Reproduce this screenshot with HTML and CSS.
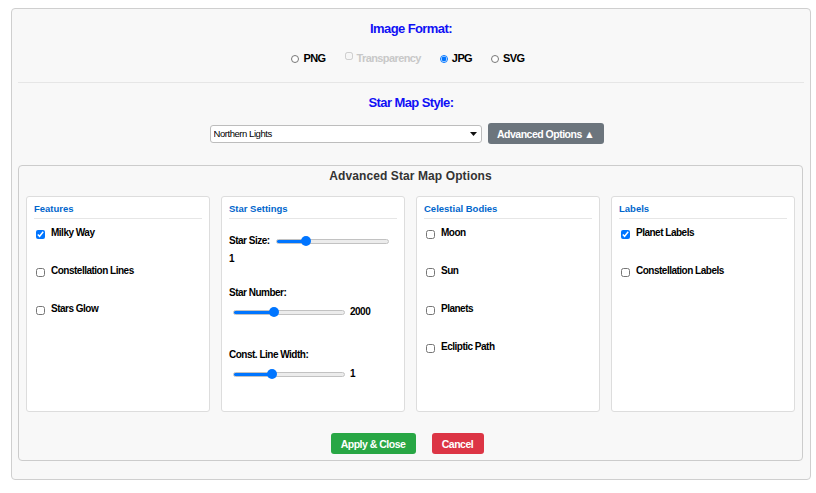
FILE: index.html
```html
<!DOCTYPE html>
<html lang="en">
<head>
<meta charset="utf-8">
<title>Star Map Export</title>
<link rel="stylesheet" href="styles.css">
</head>
<body>
<div class="container">
  <section class="format">
    <h3 class="section-title">Image Format:</h3>
    <div class="radio-row">
      <label class="opt"><input type="radio" name="fmt"><span>PNG</span></label>
      <label class="opt disabled"><input type="checkbox" disabled><span>Transparency</span></label>
      <label class="opt"><input type="radio" name="fmt" checked><span>JPG</span></label>
      <label class="opt"><input type="radio" name="fmt"><span>SVG</span></label>
    </div>
  </section>
  <section class="style">
    <h3 class="section-title">Star Map Style:</h3>
    <div class="style-row">
      <div class="select-wrap">
        <select class="style-select">
          <option>Northern Lights</option>
        </select>
        <svg class="select-arrow" width="7" height="4" viewBox="0 0 7 4"><path d="M0 0H7L3.5 4Z" fill="#111"/></svg>
      </div>
      <button class="btn btn-grey">Advanced Options ▲</button>
    </div>
  </section>
  <section class="panel">
    <h2 class="panel-title">Advanced Star Map Options</h2>
    <div class="cards">
      <div class="card">
        <h4 class="card-title">Features</h4>
        <label class="check"><input type="checkbox" checked><span>Milky Way</span></label>
        <label class="check"><input type="checkbox"><span>Constellation Lines</span></label>
        <label class="check"><input type="checkbox"><span>Stars Glow</span></label>
      </div>
      <div class="card">
        <h4 class="card-title">Star Settings</h4>
        <div class="slider-row first">
          <span class="lbl">Star Size:</span>
          <input type="range" class="range w113" min="0" max="100" value="24" style="--p:26%">
        </div>
        <div class="val-line">1</div>
        <div class="lbl group2">Star Number:</div>
        <div class="slider-row indent">
          <input type="range" class="range w112" min="0" max="100" value="35" style="--p:37%">
          <span class="val">2000</span>
        </div>
        <div class="lbl group3">Const. Line Width:</div>
        <div class="slider-row indent">
          <input type="range" class="range w112" min="0" max="100" value="33" style="--p:35%">
          <span class="val">1</span>
        </div>
      </div>
      <div class="card">
        <h4 class="card-title">Celestial Bodies</h4>
        <label class="check"><input type="checkbox"><span>Moon</span></label>
        <label class="check"><input type="checkbox"><span>Sun</span></label>
        <label class="check"><input type="checkbox"><span>Planets</span></label>
        <label class="check"><input type="checkbox"><span>Ecliptic Path</span></label>
      </div>
      <div class="card">
        <h4 class="card-title">Labels</h4>
        <label class="check"><input type="checkbox" checked><span>Planet Labels</span></label>
        <label class="check"><input type="checkbox"><span>Constellation Labels</span></label>
      </div>
    </div>
    <div class="actions">
      <button class="btn btn-green">Apply &amp; Close</button>
      <button class="btn btn-red">Cancel</button>
    </div>
  </section>
</div>
</body>
</html>
```
FILE: styles.css
```css
* { box-sizing: border-box; }
html, body { margin: 0; padding: 0; background: #fff; }
body {
  font-family: "Liberation Sans", Arial, sans-serif;
  color: #000;
}
.container {
  margin: 8px 0 0 11px;
  width: 800px;
  height: 472px;
  border: 1px solid #cfcfcf;
  border-radius: 4px;
  background: #f8f8f8;
  padding: 0 6px;
}
.section-title {
  margin: 0;
  font-size: 13px;
  letter-spacing: -0.6px;
  line-height: 16px;
  font-weight: bold;
  color: #1010f5;
  text-align: center;
}
.format {
  padding-top: 12px;
  padding-bottom: 16px;
  border-bottom: 1px solid #e6e6e6;
}
.radio-row {
  margin-top: 13px;
  display: flex;
  justify-content: center;
  gap: 19px;
  height: 16px;
  align-items: center;
  padding-right: 6px;
}
.opt {
  display: inline-flex;
  align-items: center;
  font-size: 11px;
  letter-spacing: -0.6px;
  font-weight: bold;
  line-height: 16px;
  white-space: nowrap;
}
.opt input {
  width: 8px;
  height: 8px;
  margin: 1px 4px 0 0;
}
.opt.disabled { color: #c8c8c8; }
.opt.disabled input { margin-top: -5px; }
.style { padding-top: 12px; }
.style-row {
  margin-top: 12px;
  display: flex;
  justify-content: center;
  align-items: center;
  gap: 6px;
  padding-right: 9px;
  height: 21px;
}
.select-wrap { position: relative; }
.style-select {
  appearance: none;
  -webkit-appearance: none;
  width: 272px;
  height: 18px;
  border: 1px solid #bdbdbd;
  border-radius: 3px;
  background: #fff;
  font-family: inherit;
  font-size: 9.5px;
  letter-spacing: -0.45px;
  color: #000;
  padding: 0 0 0 3px;
  margin: 0;
  display: block;
}
.select-arrow {
  position: absolute;
  right: 5px;
  top: 7px;
}
.btn {
  border: none;
  border-radius: 3px;
  color: #fff;
  font-family: inherit;
  font-weight: bold;
  font-size: 10.5px;
  letter-spacing: -0.5px;
  height: 21px;
  padding: 0;
  margin: 0;
  white-space: nowrap;
}
.btn-grey { background: #6c757d; width: 116px; }
.btn-green { background: #28a745; width: 85px; }
.btn-red { background: #dc3545; width: 52px; }
.panel {
  margin: 21px 1px 0 0;
  height: 296px;
  border: 1px solid #cccccc;
  border-radius: 4px;
  background: #f8f8f8;
  padding: 3px 7px 6px 7px;
}
.panel-title {
  margin: 0;
  font-size: 12px;
  letter-spacing: 0.1px;
  line-height: 14px;
  font-weight: bold;
  color: #333;
  text-align: center;
}
.cards {
  margin-top: 13px;
  display: grid;
  grid-template-columns: repeat(4, 1fr);
  gap: 11px;
  height: 216px;
}
.card {
  background: #fff;
  border: 1px solid #dddddd;
  border-radius: 3px;
  padding: 6px 7px 0 7px;
}
.card-title {
  margin: 0;
  font-size: 9.5px;
  line-height: 12px;
  font-weight: bold;
  color: #0066cc;
  padding-bottom: 3px;
  border-bottom: 1px solid #e6e6e6;
}
.check {
  display: flex;
  align-items: center;
  font-size: 10px;
  letter-spacing: -0.5px;
  font-weight: bold;
  line-height: 14px;
  height: 14px;
  margin-top: 24px;
  white-space: nowrap;
}
.card-title + .check { margin-top: 7px; }
.check input {
  width: 9px;
  height: 9px;
  margin: 2px 6px 0 2px;
}
.lbl, .val, .val-line {
  font-size: 10px;
  letter-spacing: -0.5px;
  font-weight: bold;
  line-height: 14px;
  white-space: nowrap;
}
.slider-row {
  display: flex;
  align-items: center;
  height: 16px;
}
.slider-row.first { margin-top: 14px; gap: 6px; }
.slider-row.indent { margin-top: 4px; padding-left: 4px; gap: 5px; }
.val-line { margin-top: 3px; }
.group2 { margin-top: 20px; }
.group3 { margin-top: 28px; }
.range {
  -webkit-appearance: none;
  appearance: none;
  height: 5px;
  margin: 0;
  flex: none;
  border-radius: 3px;
  border: 1px solid #c2c2c2;
  background: linear-gradient(to right, #0075ff var(--p), #ececec var(--p));
}
.range.w113 { width: 113px; }
.range.w112 { width: 112px; }
.range::-webkit-slider-thumb {
  -webkit-appearance: none;
  appearance: none;
  width: 10px;
  height: 10px;
  border-radius: 50%;
  background: #0075ff;
  border: none;
}
.actions {
  margin-top: 21px;
  display: flex;
  justify-content: center;
  gap: 16px;
  padding-right: 7px;
}
```
